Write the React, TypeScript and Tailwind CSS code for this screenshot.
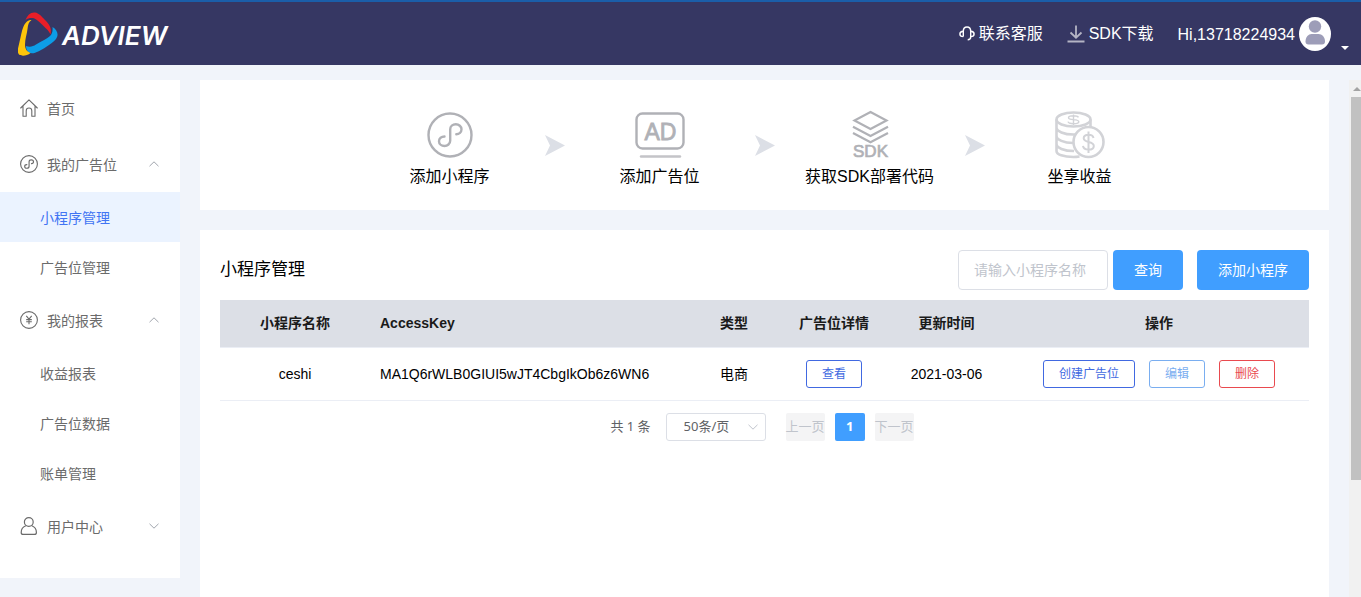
import React from "react";

const cjk = "font-['Liberation_Sans','Noto_Sans_CJK_SC',sans-serif]";
const noto = "font-['Noto_Sans','Noto_Sans_CJK_SC',sans-serif]";

function Logo() {
  return (
    <svg className="h-11 w-10 shrink-0" viewBox="0 0 40 44" aria-hidden="true">
      <path d="M7.500 8C9.500 3 12.500 0 17 .5c4 .5 6.500 4 9.500 7 5 5 7.500 8.500 6 15-1-2-2-4-5-6.500-4-4-8-8-11-9.500-3-1-6-.5-9 1.500Z" fill="#e81e28" />
      <path d="M34.500 15c5 3 6.500 8 3.500 12-2 3-6 5-10 8-6 4-13 8-17 5.500-2-1.500-3-3.500-3-6.500 4 1.500 7 .5 10-1.500 6-3.500 11-5.500 14-8.500 2-2 3-5 2.500-9Z" fill="#0d9de6" />
      <path d="M13.500 8c-3 2-3.500 5-4 9-.5 5-2.500 10-2.500 15.500 0 4 1.500 7 5.500 8.500-3.500 3-9 3.500-11.500 1.500-2.500-3-.5-7.500.5-12.500 1.500-6 2-11 4-15.500 2-4 4-6.500 8-6.500Z" fill="#fdc50a" />
    </svg>
  );
}

function HomeIcon() {
  return (
    <svg className="h-[18px] w-[18px]" viewBox="0 0 18 18" fill="none" stroke="currentColor" strokeWidth="1.1" strokeLinejoin="round" strokeLinecap="round" aria-hidden="true">
      <path d="M.7 9 9 .8 17.300 9M3 7.300v9.900h3.200v-5.400a2.800 2.800 0 0 1 5.600 0v5.400H15V7.300" />
    </svg>
  );
}

function MiniProgramIcon({ large = false }: { large?: boolean }) {
  return (
    <svg className={large ? "h-[46px] w-[46px]" : "h-[18px] w-[18px]"} viewBox="0 0 46 46" fill="none" stroke="currentColor" strokeWidth={large ? 2.4 : 2.9} strokeLinecap="round" aria-hidden="true">
      <circle cx="23" cy="23" r="21.500" />
      <path d="M17.500 24.500c-3 0-5.500 1.800-5.500 4.700 0 2.800 2.500 4.800 5.500 4.800s5.700-2.200 5.700-5.200V17.200c0-3 2.500-4.900 5.600-4.900s5.700 2.200 5.700 5-2.400 4.900-5.200 4.900" />
    </svg>
  );
}

function YenIcon() {
  return (
    <svg className="h-[18px] w-[18px]" viewBox="0 0 18 18" fill="none" stroke="currentColor" strokeWidth="1.1" aria-hidden="true">
      <circle cx="9" cy="9" r="8.400" />
      <path d="m6.300 4.800 2.700 3.400 2.700-3.400M9 8.200v5M6.200 8.600h5.600M6.200 10.800h5.600" />
    </svg>
  );
}

function UserIcon() {
  return (
    <svg className="h-[18px] w-[18px]" viewBox="0 0 18 18" fill="none" stroke="currentColor" strokeWidth="1.200" aria-hidden="true">
      <circle cx="8.800" cy="5" r="4.400" />
      <path d="M5.800 8.700C3 9.800 1.200 12.500 1.200 15.400c0 1.300.8 2 2 2h11.200c1.200 0 2-.7 2-2 0-2.900-1.700-5.600-4.600-6.700" />
    </svg>
  );
}

function Chevron({ up = false, className }: { up?: boolean; className: string }) {
  return (
    <svg className={className} viewBox="0 0 10 6" fill="none" stroke="currentColor" strokeWidth="1" aria-hidden="true">
      <path d={up ? "M.5 5.200 5 .8l4.500 4.400" : "M.5.8 5 5.200 9.500.8"} />
    </svg>
  );
}

function HeadsetIcon() {
  return (
    <svg className="h-4 w-4" viewBox="0 0 16 16" fill="none" stroke="currentColor" strokeWidth="1.400" aria-hidden="true">
      <path d="M4.300 10.600V5.200C4.300 2.600 5.800 1 8 1s3.700 1.600 3.700 4.200v5.900c0 1.800-.9 2.700-3 2.700" />
      <path d="M4.300 5.200C1.900 5.400.9 6.400.9 8s1 2.600 3.400 2.600M11.700 5.200c2.400.2 3.400 1.200 3.400 2.800s-1 2.600-3.400 2.600" />
    </svg>
  );
}

function DownloadIcon() {
  return (
    <svg className="h-[18px] w-[18px] text-[#b4b4c4]" viewBox="0 0 18 18" fill="none" stroke="currentColor" strokeWidth="1.800" aria-hidden="true">
      <path d="M9 .5v12M3.500 7.500 9 12.700l5.500-5.200M.5 16.500h17" />
    </svg>
  );
}

function Avatar() {
  return (
    <svg className="h-[34px] w-8" viewBox="0 0 32 34" aria-hidden="true">
      <ellipse cx="16" cy="17" rx="16" ry="17" fill="#fff" />
      <circle cx="16" cy="9.500" r="6.200" fill="#9d9db8" />
      <path d="M6.500 24.500c0-4.500 3-7.500 6-7.500h7c3.500 0 6.500 3 6.500 7.500 0 2-1 3-3 3H9.500c-2 0-3-1-3-3Z" fill="#9d9db8" />
    </svg>
  );
}

function AdIcon() {
  return (
    <svg className="h-[46px] w-[50px]" viewBox="0 0 50 46" aria-hidden="true">
      <rect x="1.500" y="1.500" width="47" height="35" rx="6" fill="none" stroke="currentColor" strokeWidth="2.400" />
      <text x="25.500" y="28" textAnchor="middle" fontSize="23" fill="currentColor" stroke="currentColor" strokeWidth=".8" className="font-['Liberation_Sans',sans-serif]">AD</text>
      <path d="M6 44.500h39" stroke="#c4c4c8" strokeWidth="2.400" strokeLinecap="round" />
    </svg>
  );
}

function SdkIcon() {
  return (
    <svg className="h-12 w-10 overflow-visible" viewBox="0 0 40 48" fill="none" stroke="currentColor" strokeWidth="2.200" aria-hidden="true">
      <path d="M20.500 1 36.500 9.500l-16 8.500-16-8.500ZM3 15.700 20.500 25 38 15.700M3 22 20.500 31.200 38 22" />
      <text x="20.500" y="46" textAnchor="middle" fontSize="17" fill="currentColor" strokeWidth=".7" className="font-['Liberation_Sans',sans-serif]">SDK</text>
    </svg>
  );
}

function CoinsIcon() {
  return (
    <svg className="h-12 w-[50px] text-[#d2d3d7]" viewBox="0 0 50 48" fill="none" stroke="currentColor" strokeWidth="2.600" aria-hidden="true">
      <ellipse cx="18.500" cy="8.500" rx="17" ry="7" />
      <path d="M1.500 8.500V40c0 3.500 7 6 17 6 2 0 4-.2 6-.5M35.500 8.500V15M1.500 16.500c0 3.800 7.500 7 17 7 2.500 0 4-.2 5.500-.6M1.500 25c0 3.800 7.500 7 16.500 7M1.500 33c0 3.800 7.500 7 17.500 7" />
      <circle cx="33.500" cy="31" r="15" fill="#fff" />
      <path strokeWidth="1.400" d="M23.500 6.300c-.8-1.100-2.500-1.600-5-1.600-3 0-5 .6-5 2s2 1.700 5 1.900 5.300.6 5.300 2.100-2.200 2-5.300 2-5.200-.6-5.500-2M18.500 3.500v10.500" />
      <path strokeWidth="2" d="M38.500 27c-.4-2-2.200-3.200-5-3.200-3 0-4.800 1.400-4.800 3.500 0 2.300 2 3 4.800 3.600 3 .7 5.300 1.500 5.300 4 0 2.300-2 3.700-5.300 3.700-3.200 0-5.200-1.400-5.500-3.700M33.500 20.500v21.500" />
    </svg>
  );
}

function StepArrow() {
  return (
    <svg className="mt-6 h-[21px] w-5 shrink-0" viewBox="0 0 20 21" fill="#dcdfe6" aria-hidden="true">
      <path d="M0 0 20 10.500 0 21 5 10.500Z" />
    </svg>
  );
}

function Step({ icon, label }: { icon: React.ReactNode; label: string }) {
  return (
    <li className="flex w-[190px] flex-col items-center text-[#b0b1b6]">
      <span className="flex h-12 items-center">{icon}</span>
      <span className="mt-1.5 text-base leading-6 text-black">{label}</span>
    </li>
  );
}

function MenuGroup({ icon, label, open, children }: { icon: React.ReactNode; label: string; open?: boolean; children?: React.ReactNode }) {
  return (
    <li>
      <button type="button" aria-expanded={!!open} className="flex h-14 w-full items-center pr-[21px] pl-5 text-left">
        {icon}
        <span className="ml-[9px] flex-1 pt-0.5">{label}</span>
        <Chevron up={open} className="h-1.5 w-2.5 text-[#a0a5ad]" />
      </button>
      {children && <ul>{children}</ul>}
    </li>
  );
}

function SubItem({ label, active }: { label: string; active?: boolean }) {
  return (
    <li>
      <a href="#" aria-current={active ? "page" : undefined} className={`flex h-[50px] items-center pt-0.5 pl-10 ${active ? "bg-[#ebf3ff] text-[#4174f3]" : ""}`}>
        {label}
      </a>
    </li>
  );
}

const smallButton = "h-7 rounded-[3px] border px-[15px] text-xs";

export default function App() {
  return (
    <div className={`flex h-screen flex-col overflow-hidden bg-[#f1f4fa] text-sm text-black ${cjk}`}>
      <header className="flex h-[65px] shrink-0 items-center justify-between border-t-2 border-[#1b5ea9] bg-[#363763] pr-3 pl-[18px] text-base text-white">
        <a href="#" className="flex items-center gap-1">
          <Logo />
          <span className="pt-1 font-['Inter',sans-serif] text-[26px] font-semibold italic">ADVIEW</span>
        </a>
        <nav className="flex items-center">
          <a href="#" className="flex items-center gap-1">
            <HeadsetIcon />
            联系客服
          </a>
          <a href="#" className="ml-6 flex items-center gap-1">
            <DownloadIcon />
            SDK下载
          </a>
          <button type="button" className="ml-6 flex items-center gap-1">
            <span className="pt-0.5">Hi,13718224934</span>
            <Avatar />
            <svg className="mt-7 ml-1.5 h-1 w-2" viewBox="0 0 8 4" fill="#fff" aria-hidden="true">
              <path d="M0 0h8L4 4Z" />
            </svg>
          </button>
        </nav>
      </header>

      <div className="flex min-h-0 flex-1 gap-5 pt-[15px]">
        <aside className="w-[180px] shrink-0 self-start bg-white pb-6 text-[#6b6b6b]">
          <ul>
            <li>
              <a href="#" className="flex h-14 items-center pl-5">
                <HomeIcon />
                <span className="ml-[9px] pt-0.5">首页</span>
              </a>
            </li>
            <MenuGroup icon={<MiniProgramIcon />} label="我的广告位" open>
              <SubItem label="小程序管理" active />
              <SubItem label="广告位管理" />
            </MenuGroup>
            <MenuGroup icon={<YenIcon />} label="我的报表" open>
              <SubItem label="收益报表" />
              <SubItem label="广告位数据" />
              <SubItem label="账单管理" />
            </MenuGroup>
            <MenuGroup icon={<UserIcon />} label="用户中心" />
          </ul>
        </aside>

        <main className="flex min-w-0 flex-1 flex-col gap-5">
          <ol className="flex h-[130px] shrink-0 justify-center bg-white pt-[31px]">
            <Step icon={<MiniProgramIcon large />} label="添加小程序" />
            <StepArrow />
            <Step icon={<AdIcon />} label="添加广告位" />
            <StepArrow />
            <Step icon={<SdkIcon />} label="获取SDK部署代码" />
            <StepArrow />
            <Step icon={<CoinsIcon />} label="坐享收益" />
          </ol>

          <section className="flex-1 bg-white p-5">
            <div className="flex h-10 items-center">
              <h1 className="flex-1 text-[17px]">小程序管理</h1>
              <input type="text" aria-label="小程序名称" placeholder="请输入小程序名称" className="h-10 w-[150px] rounded border border-[#dcdfe6] px-[15px] placeholder:text-[#c0c4cc]" />
              <button type="button" className="ml-[5px] h-10 rounded bg-[#409eff] px-[21px] text-white">查询</button>
              <button type="button" className="ml-3.5 h-10 rounded bg-[#409eff] px-[21px] text-white">添加小程序</button>
            </div>

            <table className="mt-2.5 w-full table-fixed border-collapse text-center">
              <thead>
                <tr className="h-[47px] border-b border-[#ebeef5] bg-[#dcdfe6] text-[#1a1a1a]">
                  <th className="w-[150px]">小程序名称</th>
                  <th className="pl-2.5 text-left">AccessKey</th>
                  <th className="w-[100px]">类型</th>
                  <th className="w-[100px]">广告位详情</th>
                  <th className="w-[125px]">更新时间</th>
                  <th className="w-[300px]">操作</th>
                </tr>
              </thead>
              <tbody>
                <tr className="h-[53px] border-b border-[#ebeef5]">
                  <td>ceshi</td>
                  <td className="pl-2.5 text-left">MA1Q6rWLB0GIUI5wJT4CbgIkOb6z6WN6</td>
                  <td>电商</td>
                  <td>
                    <button type="button" className={`${smallButton} border-[#4169e1] text-[#4169e1]`}>查看</button>
                  </td>
                  <td>2021-03-06</td>
                  <td>
                    <div className="flex justify-center gap-3.5">
                      <button type="button" className={`${smallButton} border-[#4169e1] text-[#4169e1]`}>创建广告位</button>
                      <button type="button" className={`${smallButton} border-[#7aaef0] text-[#7aaef0]`}>编辑</button>
                      <button type="button" className={`${smallButton} border-[#e94a4f] text-[#e94a4f]`}>删除</button>
                    </div>
                  </td>
                </tr>
              </tbody>
            </table>

            <nav aria-label="分页" className={`mt-3 flex h-7 items-center justify-center pr-[5px] text-[13px] text-[#606266] ${noto}`}>
              <span>共 1 条</span>
              <div className="relative ml-[15px]">
                <select aria-label="每页条数" className="h-7 w-[100px] appearance-none rounded-[3px] border border-[#dcdfe6] bg-white pl-[17px]">
                  <option>50条/页</option>
                </select>
                <Chevron className="pointer-events-none absolute top-[11px] right-2 h-1.5 w-2.5 text-[#c0c4cc]" />
              </div>
              <button type="button" disabled className="ml-5 h-7 rounded-xs bg-[#f4f4f5] text-[#c0c4cc]">上一页</button>
              <button type="button" aria-current="page" className="mx-2.5 h-7 w-[30px] rounded-xs bg-[#409eff] font-bold text-white">1</button>
              <button type="button" disabled className="h-7 rounded-xs bg-[#f4f4f5] text-[#c0c4cc]">下一页</button>
            </nav>
          </section>
        </main>

        <div className="flex w-3 shrink-0 flex-col items-end bg-[#f1f1f1]" aria-hidden="true">
          <svg className="h-[17px] w-2.5 shrink-0" viewBox="0 0 10 17" fill="#a3a3a3">
            <path d="M2 11 6 7l4 4Z" />
          </svg>
          <div className="h-[383px] w-2.5 bg-[#c1c1c1]" />
        </div>
      </div>
    </div>
  );
}
